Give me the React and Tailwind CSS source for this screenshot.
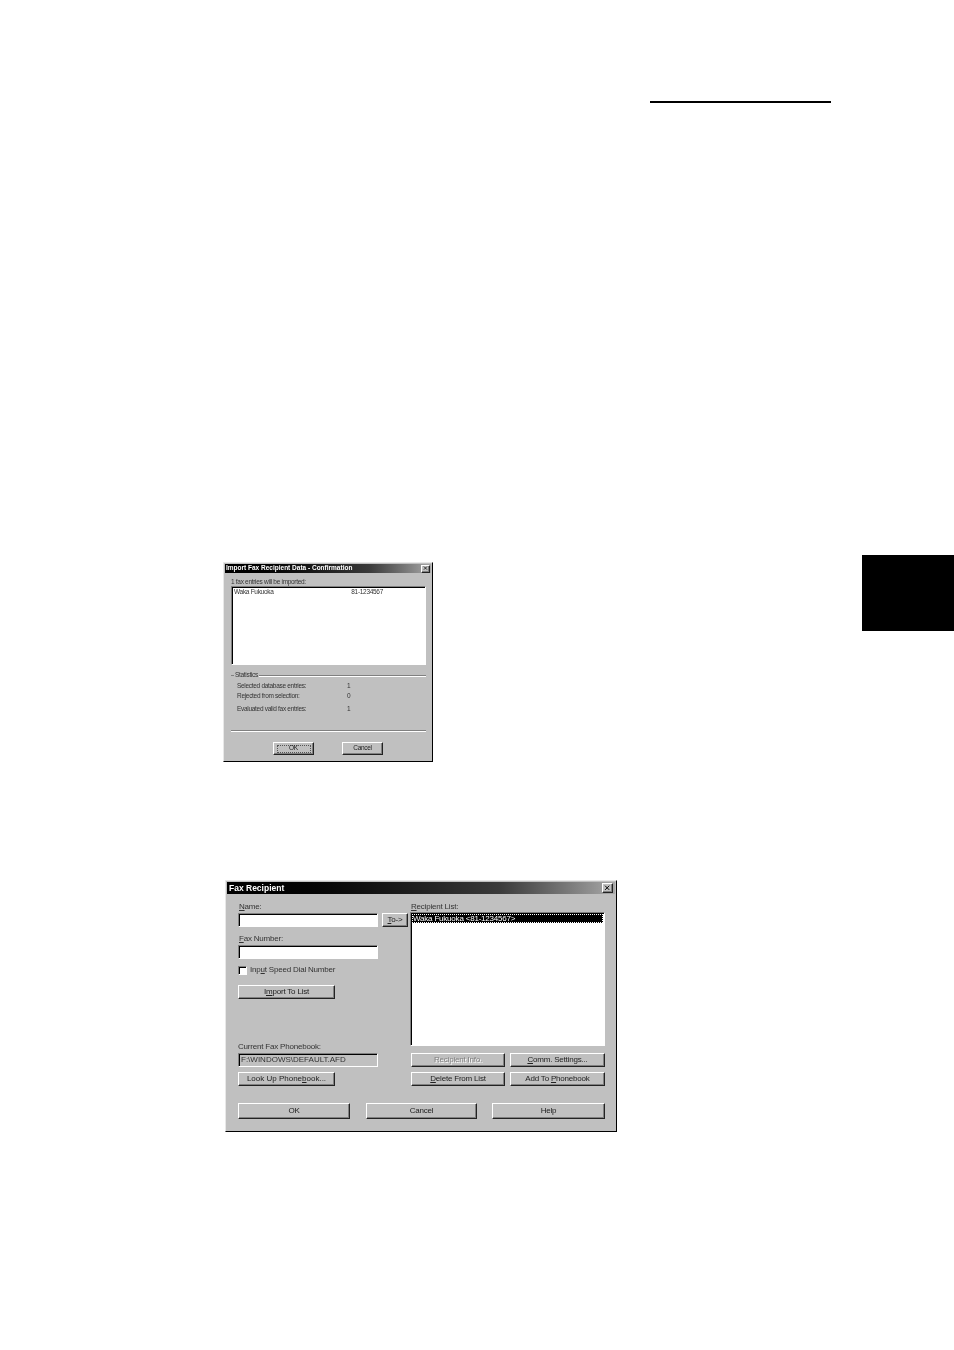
import React from "react";

const raised =
  "border border-t-white border-l-white border-r-[#222] border-b-[#222] shadow-[inset_-1px_-1px_0_#808080] bg-[#c0c0c0]";
const sunken =
  "border border-t-[#808080] border-l-[#808080] border-r-white border-b-white shadow-[inset_1px_1px_0_#000]";

const Btn = ({ className = "", text = "text-[8px]", children }) => (
  <div
    className={`${raised} ${text} flex items-center justify-center leading-none text-[#222] ${className}`}
  >
    {children}
  </div>
);

const CloseBox = ({ className = "" }) => (
  <div className={`${raised} flex items-center justify-center ${className}`}>
    <svg viewBox="0 0 8 8" className="w-[70%] h-[70%]">
      <path d="M1 1L7 7M7 1L1 7" stroke="#000" strokeWidth="1.4" />
    </svg>
  </div>
);

const TitleBar = ({ title, className = "", text, children }) => (
  <div
    className={`flex items-center justify-between bg-gradient-to-r from-[#000] via-[#3a3a3a] via-70% to-[#a8a8a8] text-white font-bold ${text} ${className}`}
  >
    <span className="leading-none whitespace-nowrap">{title}</span>
    {children}
  </div>
);

const Dialog = ({ className = "", children }) => (
  <div
    className={`border border-t-[#e8e8e8] border-l-[#e8e8e8] border-r-black border-b-black bg-[#c0c0c0] p-[1px] flex flex-col blur-[0.4px] ${className}`}
  >
    {children}
  </div>
);

const ConfirmDialog = () => {
  const stats = [
    { label: "Selected database entries:", value: "1", cls: "h-[10px]" },
    { label: "Rejected from selection:", value: "0", cls: "h-[10px]" },
    { label: "Evaluated valid fax entries:", value: "1", cls: "h-[10px] mt-[3px]" },
  ];
  return (
    <Dialog className="w-[210px] h-[200px] text-[6.5px] tracking-[-0.3px] text-[#333]">
      <TitleBar
        title="Import Fax Recipient Data - Confirmation"
        text="text-[6.5px] tracking-normal"
        className="h-[9px] pl-[1px] pr-[1px]"
      >
        <CloseBox className="w-[9px] h-[8px]" />
      </TitleBar>
      <div className="flex flex-col pl-[6px] pr-[5px] flex-1">
        <div className="h-[13px] flex items-end leading-none pb-[1px]">
          1 fax entries will be imported:
        </div>
        <div className={`${sunken} bg-white h-[79px] flex justify-between leading-none pl-[2px] pt-[2px] pr-[42px]`}>
          <span>Waka Fukuoka</span>
          <span>81-1234567</span>
        </div>
        <div className="flex items-center mt-[5px] h-[10px]">
          <div className="w-[3px] border-t border-[#808080]"></div>
          <span className="px-[1px] leading-none">Statistics</span>
          <div className="flex-1 border-t border-[#808080] shadow-[0_1px_0_#fff]"></div>
        </div>
        <div className="pl-[6px] mt-[1px]">
          {stats.map((s) => (
            <div key={s.label} className={`flex items-center leading-none ${s.cls}`}>
              <span className="w-[110px] whitespace-nowrap">{s.label}</span>
              <span>{s.value}</span>
            </div>
          ))}
        </div>
        <div className="mt-[16px] border-t border-[#808080] shadow-[0_1px_0_#fff]"></div>
        <div className="flex mt-[11px] pl-[42px] gap-[28px]">
          <Btn text="text-[6.5px]" className="w-[41px] h-[13px]">
            <span className="border border-dotted border-[#555] w-[34px] h-[8px] flex items-center justify-center">
              OK
            </span>
          </Btn>
          <Btn text="text-[6.5px]" className="w-[41px] h-[13px]">
            Cancel
          </Btn>
        </div>
      </div>
    </Dialog>
  );
};

const RecipientDialog = () => (
  <Dialog className="w-[392px] h-[252px] text-[8px] tracking-[-0.2px] text-[#333]">
    <TitleBar title="Fax Recipient" text="text-[8.5px] tracking-normal" className="h-[12px] pl-[2px] pr-[2px]">
      <CloseBox className="w-[11px] h-[10px]" />
    </TitleBar>
    <div className="flex pl-[11px] mt-[8px]">
      <div className="w-[172px] flex flex-col">
        <div className="h-[10px] leading-none pl-[1px] pt-[1px]">
          <u>N</u>ame:
        </div>
        <div className="flex gap-[4px] mt-[1px]">
          <div className={`${sunken} bg-white w-[140px] h-[14px]`}></div>
          <Btn className="w-[26px] h-[14px]">
            <span>
              <u>T</u>o-&gt;
            </span>
          </Btn>
        </div>
        <div className="h-[10px] leading-none mt-[7px] pl-[1px] pt-[1px]">
          <u>F</u>ax Number:
        </div>
        <div className={`${sunken} bg-white w-[140px] h-[14px] mt-[1px]`}></div>
        <div className="flex items-center gap-[3px] mt-[6px] h-[10px]">
          <div className={`${sunken} bg-white w-[9px] h-[9px]`}></div>
          <span className="leading-none">
            Inp<u>u</u>t Speed Dial Number
          </span>
        </div>
        <Btn className="w-[97px] h-[14px] mt-[10px]">
          <span>
            I<u>m</u>port To List
          </span>
        </Btn>
        <div className="h-[10px] leading-none mt-[43px] pt-[1px]">Current Fax Phonebook:</div>
        <div className={`${sunken} w-[140px] h-[14px] mt-[1px] leading-none flex items-center pl-[2px] whitespace-nowrap tracking-normal`}>
          F:\WINDOWS\DEFAULT.AFD
        </div>
        <Btn className="w-[97px] h-[14px] mt-[5px] tracking-normal">
          <span>
            Look Up Phone<u>b</u>ook...
          </span>
        </Btn>
      </div>
      <div className="w-[195px] flex flex-col">
        <div className="h-[10px] leading-none pl-[1px] pt-[1px]">
          <u>R</u>ecipient List:
        </div>
        <div className={`${sunken} bg-white h-[134px] p-[1px]`}>
          <div className="bg-black text-white h-[9px] leading-[9px] outline-1 outline-dotted outline-white -outline-offset-1 pl-[1px] whitespace-nowrap">
            Waka Fukuoka &lt;81-1234567&gt;
          </div>
        </div>
        <div className="grid grid-cols-[94px_95px] gap-x-[5px] gap-y-[5px] mt-[7px] ml-[1px]">
          <Btn className="h-[14px]">
            <span className="text-[#808080] [text-shadow:1px_1px_0_#fff]">Recipient Info.</span>
          </Btn>
          <Btn className="h-[14px]">
            <span>
              <u>C</u>omm. Settings...
            </span>
          </Btn>
          <Btn className="h-[14px]">
            <span>
              <u>D</u>elete From List
            </span>
          </Btn>
          <Btn className="h-[14px]">
            <span>
              Add To <u>P</u>honebook
            </span>
          </Btn>
        </div>
      </div>
    </div>
    <div className="flex pl-[11px] mt-[17px] gap-[16px]">
      <Btn className="w-[112px] h-[16px]">OK</Btn>
      <Btn className="w-[111px] h-[16px]">Cancel</Btn>
      <Btn className="w-[113px] h-[16px] -ml-[1px]">Help</Btn>
    </div>
  </Dialog>
);

export default function App() {
  return (
    <div className="w-[954px] h-[1350px] bg-white font-['Liberation_Sans',Arial,sans-serif] flex flex-col overflow-hidden">
      <div className="mt-[101px] ml-[650px] w-[181px] h-[2px] bg-black"></div>
      <div className="flex items-start mt-[452px]">
        <div className="ml-[223px] mt-[7px]">
          <ConfirmDialog />
        </div>
        <div className="ml-auto w-[92px] h-[76px] bg-black"></div>
      </div>
      <div className="ml-[225px] mt-[118px]">
        <RecipientDialog />
      </div>
    </div>
  );
}
